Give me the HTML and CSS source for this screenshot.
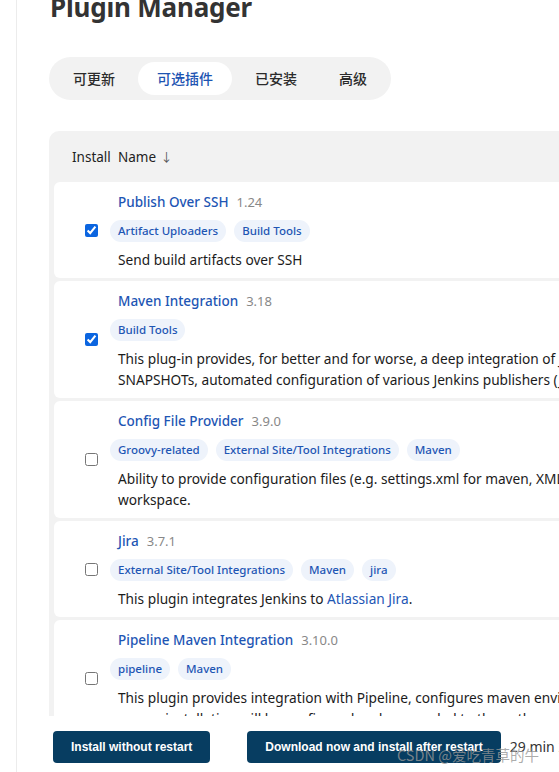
FILE: index.html
```html
<!DOCTYPE html>
<html lang="zh">
<head>
<meta charset="utf-8">
<title>Plugin Manager</title>
<link rel="stylesheet" href="styles.css">
</head>
<body>
<div class="app">
  <aside class="side"></aside>
  <main class="main">
    <h1 class="title">Plugin Manager</h1>
    <nav class="tabs">
      <span class="tab">可更新</span>
      <span class="tab active">可选插件</span>
      <span class="tab">已安装</span>
      <span class="tab">高级</span>
    </nav>
    <section class="table">
      <div class="thead">
        <span class="col-install">Install</span>
        <span class="col-name">Name <span class="arrow">↓</span></span>
      </div>
      <div class="rows">
        <div class="row">
          <div class="col-install"><input type="checkbox" checked></div>
          <div class="col-name">
            <div class="name"><a class="plink">Publish Over SSH</a><span class="ver">1.24</span></div>
            <div class="tags"><span class="tag">Artifact Uploaders</span><span class="tag">Build Tools</span></div>
            <div class="desc"><span class="line">Send build artifacts over SSH</span></div>
          </div>
        </div>
        <div class="row">
          <div class="col-install"><input type="checkbox" checked></div>
          <div class="col-name">
            <div class="name"><a class="plink">Maven Integration</a><span class="ver">3.18</span></div>
            <div class="tags"><span class="tag">Build Tools</span></div>
            <div class="desc"><span class="line">This plug-in provides, for better and for worse, a deep integration of Jenkins and Maven: Automatic triggers between projects depending on</span><span class="line">SNAPSHOTs, automated configuration of various Jenkins publishers (Junit, ...).</span></div>
          </div>
        </div>
        <div class="row">
          <div class="col-install"><input type="checkbox"></div>
          <div class="col-name">
            <div class="name"><a class="plink">Config File Provider</a><span class="ver">3.9.0</span></div>
            <div class="tags"><span class="tag">Groovy-related</span><span class="tag">External Site/Tool Integrations</span><span class="tag">Maven</span></div>
            <div class="desc"><span class="line">Ability to provide configuration files (e.g. settings.xml for maven, XML, groovy, custom files,...) loaded through the UI which will be copied to the job</span><span class="line">workspace.</span></div>
          </div>
        </div>
        <div class="row">
          <div class="col-install"><input type="checkbox"></div>
          <div class="col-name">
            <div class="name"><a class="plink">Jira</a><span class="ver">3.7.1</span></div>
            <div class="tags"><span class="tag">External Site/Tool Integrations</span><span class="tag">Maven</span><span class="tag">jira</span></div>
            <div class="desc"><span class="line">This plugin integrates Jenkins to <a class="dlink">Atlassian Jira</a>.</span></div>
          </div>
        </div>
        <div class="row">
          <div class="col-install"><input type="checkbox"></div>
          <div class="col-name">
            <div class="name"><a class="plink">Pipeline Maven Integration</a><span class="ver">3.10.0</span></div>
            <div class="tags"><span class="tag">pipeline</span><span class="tag">Maven</span></div>
            <div class="desc"><span class="line">This plugin provides integration with Pipeline, configures maven environment to use within a pipeline job by calling sh mvn or bat mvn. The selected</span><span class="line">maven installation will be configured and prepended to the path.</span></div>
          </div>
        </div>
      </div>
    </section>
    <footer class="bottom">
      <button class="btn btn-first">Install without restart</button>
      <button class="btn">Download now and install after restart</button>
      <span class="updated">29 min 27 sec ago</span>
    </footer>
  </main>
</div>
<div class="watermark">CSDN @爱吃青草的牛</div>
</body>
</html>
```
FILE: styles.css
```css
html, body {
  margin: 0;
  padding: 0;
  height: 100%;
  overflow: hidden;
  background: #fff;
}
body {
  font-family: "Noto Sans", "Noto Sans CJK SC", sans-serif;
  font-size: 13px;
  color: #1b1b1b;
  position: relative;
}
.app {
  display: flex;
  height: 772px;
}
.side {
  flex: 0 0 16px;
  border-right: 1px solid #ececec;
}
.main {
  flex: 1;
  min-width: 0;
  display: flex;
  flex-direction: column;
  padding-left: 32px;
  overflow: hidden;
}
.title {
  margin: -9px 0 0 1px;
  font-size: 26px;
  line-height: 32px;
  font-weight: 700;
  color: #333;
  letter-spacing: -0.2px;
  white-space: nowrap;
}
.tabs {
  margin-top: 34px;
  align-self: flex-start;
  display: flex;
  gap: 4px;
  padding: 5px;
  background: #f2f2f2;
  border-radius: 22px;
}
.tab {
  height: 33px;
  line-height: 33px;
  padding: 0 19px;
  border-radius: 17px;
  font-family: "Noto Sans CJK SC", sans-serif;
  font-size: 14px;
  font-weight: 500;
  color: #2b2b2b;
}
.tab.active {
  background: #fff;
  color: #1d54b2;
}
.table {
  margin-top: 31px;
  flex: 1;
  min-height: 0;
  width: 900px;
  background: #f2f2f2;
  border-top-left-radius: 10px;
  padding-left: 5px;
  overflow: hidden;
}
.thead {
  height: 51px;
  display: flex;
  align-items: center;
  font-size: 13.5px;
  color: #222;
}
.col-install {
  flex: 0 0 auto;
  width: 36px;
  padding: 0 10px 0 18px;
  text-align: center;
}
.thead .col-install { text-align: left; }
.arrow {
  color: #555;
  font-size: 12px;
  margin-left: 1px;
}
.rows {
  display: flex;
  flex-direction: column;
  gap: 3px;
}
.row {
  display: flex;
  align-items: center;
  background: #fff;
  border-radius: 6px 0 0 6px;
  padding: 10px 0 8px;
}
.row input {
  width: 13px;
  height: 13px;
  accent-color: #0b65e0;
  display: block;
  margin: -2px auto 0;
  position: relative;
  left: 1px;
}
.col-name {
  flex: 1;
  min-width: 0;
}
.name {
  line-height: 20px;
  white-space: nowrap;
}
.plink {
  color: #1e56b4;
  font-size: 13.5px;
  font-weight: 500;
}
.ver {
  color: #888;
  margin-left: 8px;
  font-size: 13px;
}
.tags {
  margin: 8px 0 7px -8px;
  display: flex;
  gap: 8px;
}
.tag {
  height: 22px;
  line-height: 22px;
  padding: 0 8px;
  border-radius: 11px;
  background: #eef3fb;
  color: #1e56b4;
  font-size: 11.5px;
  font-weight: 500;
  white-space: nowrap;
}
.desc {
  line-height: 21px;
  font-size: 13.7px;
}
.line {
  display: block;
  white-space: nowrap;
}
.dlink { color: #1e56b4; }
.bottom {
  flex: 0 0 56px;
  display: flex;
  align-items: flex-start;
  padding-top: 15px;
  box-sizing: border-box;
  padding-left: 4px;
  white-space: nowrap;
}
.btn {
  height: 32px;
  border: 0;
  border-radius: 4px;
  background: #073d61;
  color: #fff;
  font-family: "Liberation Sans", sans-serif;
  font-size: 12px;
  font-weight: 700;
  padding: 0 18px;
  flex: 0 0 auto;
}
.btn-first { margin-right: 37px; }
.updated {
  margin-left: 9px;
  line-height: 32px;
  font-size: 14px;
  color: #333;
}
.watermark {
  position: absolute;
  left: 397px;
  top: 745px;
  font-family: "Noto Sans CJK SC", sans-serif;
  font-size: 14.5px;
  line-height: 20px;
  color: rgba(150,150,150,0.8);
  white-space: nowrap;
}
```
